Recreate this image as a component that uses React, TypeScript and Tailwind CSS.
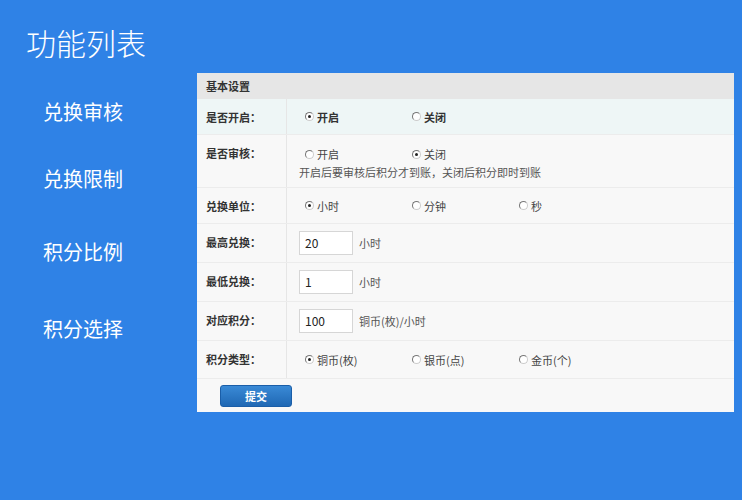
import React from "react";

const FONT = { fontFamily: '"Noto Sans CJK SC", "Noto Sans", sans-serif' };

const MENU = [
  { label: "兑换审核", mt: "mt-[26px]" },
  { label: "兑换限制", mt: "mt-[41px]" },
  { label: "积分比例", mt: "mt-[47px]" },
  { label: "积分选择", mt: "mt-[51px]" },
];

function Radio({ checked, label }: { checked?: boolean; label: string }) {
  return (
    <span className="flex w-[107px] items-center gap-[3px]">
      <span className="flex size-[9px] items-center justify-center rounded-full border border-[#777] border-r-[#ccc] border-b-[#ccc] bg-white">
        {checked && <span className="size-[3px] rounded-full bg-[#222]" />}
      </span>
      <span>{label}</span>
    </span>
  );
}

function Row({
  label,
  h,
  bg = "bg-[#f8f8f8]",
  children,
}: {
  label: string;
  h: string;
  bg?: string;
  children: React.ReactNode;
}) {
  return (
    <div className={`flex border-b border-[#ececec] ${h} ${bg}`}>
      <div className="w-[90px] shrink-0 border-r border-[#e6e6e6] pl-[9px] pt-[11px] font-bold text-[#333]">
        {label}
      </div>
      <div className="flex-1 pl-[12px]">{children}</div>
    </div>
  );
}

function NumInput({ value, unit }: { value: string; unit: string }) {
  return (
    <div className="flex h-full items-center gap-[6px]">
      <div className="flex h-[24px] w-[54px] items-center border border-[#d6d6d6] bg-white pl-[5px] text-[12px] text-[#222]">
        {value}
      </div>
      <span className="text-[#555]">{unit}</span>
    </div>
  );
}

export default function App() {
  return (
    <div className="h-[500px] w-[742px] overflow-hidden bg-[#2f82e6]" style={FONT}>
      <div className="h-[73px] pl-[26px] pt-[21px] text-[30px] leading-[42px] font-light text-white">
        功能列表
      </div>
      <div className="flex">
        <div className="w-[197px] shrink-0 pl-[43px] text-[20px] leading-[26px] text-white">
          {MENU.map((m) => (
            <div key={m.label} className={m.mt}>
              {m.label}
            </div>
          ))}
        </div>
        <div className="w-[537px] bg-[#f8f8f8] text-[11px] leading-[14px] text-[#444]">
          <div className="flex h-[26px] items-center bg-[#e6e6e6] pl-[9px] font-bold text-[#333]">
            基本设置
          </div>
          <Row label="是否开启：" h="h-[36px]" bg="bg-[#eef6f6]">
            <div className="flex h-full items-center pl-[6px] font-bold text-[#333]">
              <Radio checked label="开启" />
              <Radio label="关闭" />
            </div>
          </Row>
          <Row label="是否审核：" h="h-[53px]">
            <div className="flex pl-[6px] pt-[12px]">
              <Radio label="开启" />
              <Radio checked label="关闭" />
            </div>
            <div className="mt-[4px] text-[#555]">开启后要审核后积分才到账，关闭后积分即时到账</div>
          </Row>
          <Row label="兑换单位：" h="h-[36px]">
            <div className="flex h-full items-center pl-[6px]">
              <Radio checked label="小时" />
              <Radio label="分钟" />
              <Radio label="秒" />
            </div>
          </Row>
          <Row label="最高兑换：" h="h-[39px]">
            <NumInput value="20" unit="小时" />
          </Row>
          <Row label="最低兑换：" h="h-[39px]">
            <NumInput value="1" unit="小时" />
          </Row>
          <Row label="对应积分：" h="h-[39px]">
            <NumInput value="100" unit="铜币(枚)/小时" />
          </Row>
          <Row label="积分类型：" h="h-[38px]">
            <div className="flex h-full items-center pl-[6px]">
              <Radio checked label="铜币(枚)" />
              <Radio label="银币(点)" />
              <Radio label="金币(个)" />
            </div>
          </Row>
          <div className="flex h-[33px] items-center pl-[23px]">
            <button
              type="button"
              className="h-[22px] w-[72px] rounded-[3px] border border-[#1a5ea8] bg-gradient-to-b from-[#3a8ad6] to-[#1f68b4] text-[11px] font-bold text-white"
            >
              提交
            </button>
          </div>
        </div>
      </div>
    </div>
  );
}
